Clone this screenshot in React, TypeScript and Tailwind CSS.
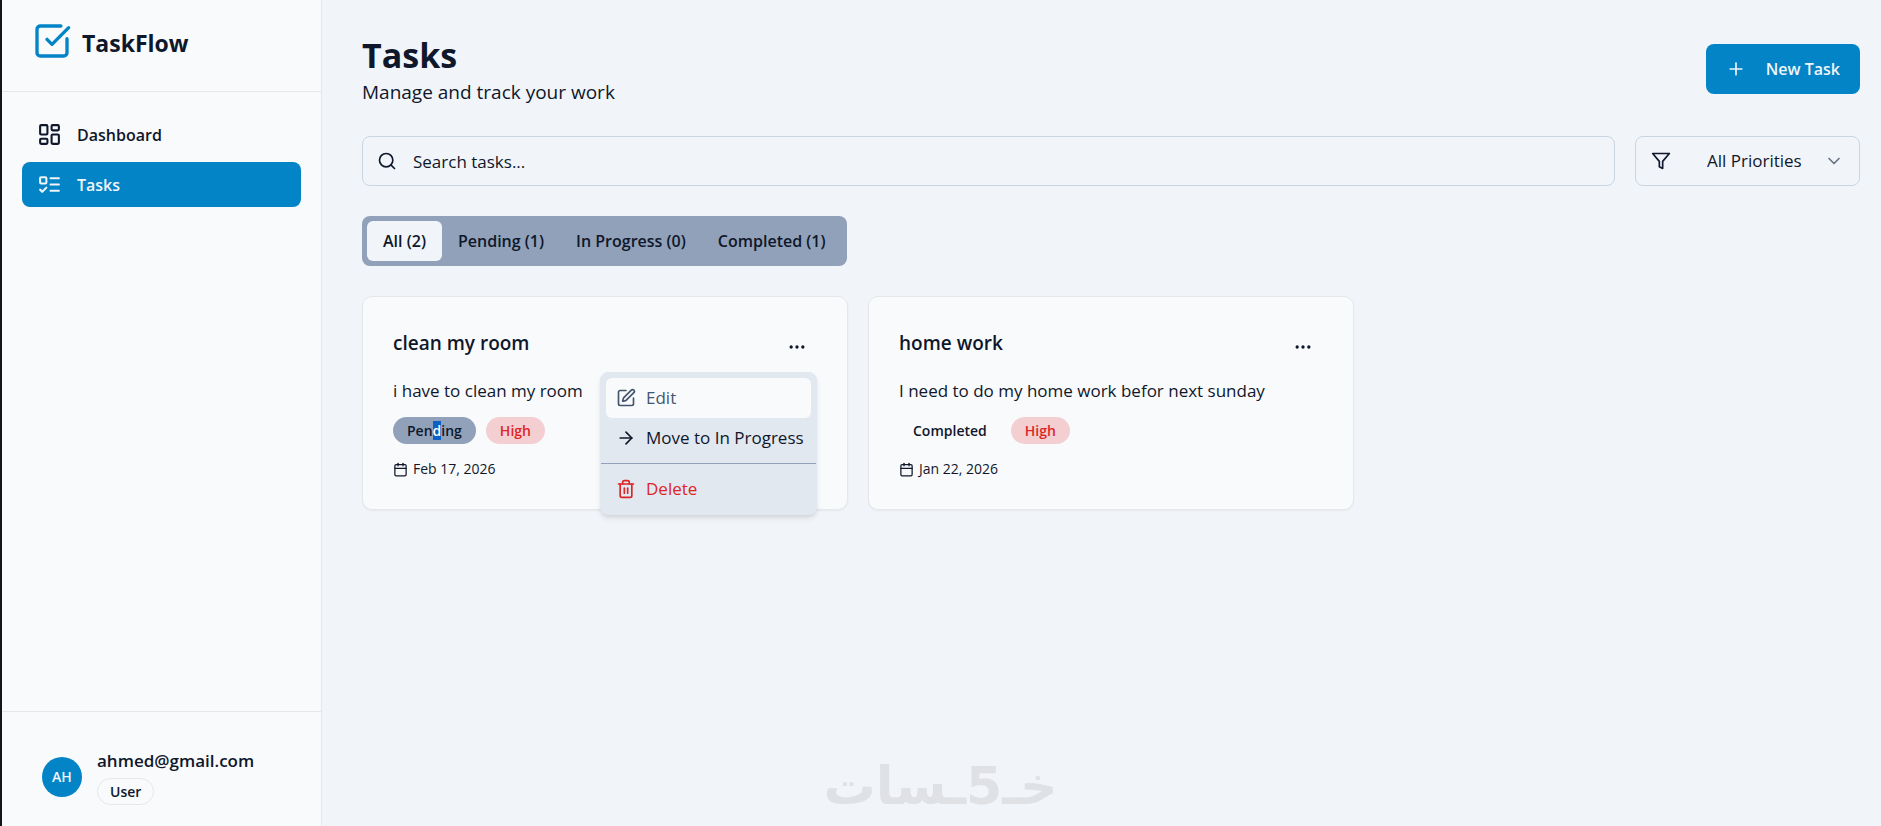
import React from "react";
import {
  ArrowRight,
  Calendar,
  ChevronDown,
  Ellipsis,
  LayoutDashboard,
  Plus,
  Search,
  SquareCheckBig,
  SquarePen,
} from "lucide-react";

const tabs = [
  { label: "All (2)", active: true },
  { label: "Pending (1)", active: false },
  { label: "In Progress (0)", active: false },
  { label: "Completed (1)", active: false },
];

const ListTodoIcon = () => (
  <svg
    viewBox="0 0 24 24"
    fill="none"
    stroke="currentColor"
    strokeWidth="2"
    strokeLinecap="round"
    strokeLinejoin="round"
    className="size-[25px]"
  >
    <rect x="3" y="5" width="6" height="6" rx="1" />
    <path d="m3 17 2 2 4-4" />
    <path d="M13 6h8" />
    <path d="M13 12h8" />
    <path d="M13 18h8" />
  </svg>
);

const FilterIcon = () => (
  <svg
    viewBox="0 0 24 24"
    fill="none"
    stroke="currentColor"
    strokeWidth="2"
    strokeLinecap="round"
    strokeLinejoin="round"
    className="pointer-events-none absolute left-4 size-5"
  >
    <polygon points="22 3 2 3 10 12.46 10 19 14 21 14 12.46 22 3" />
  </svg>
);

const TrashIcon = () => (
  <svg
    viewBox="0 0 24 24"
    fill="none"
    stroke="currentColor"
    strokeWidth="2"
    strokeLinecap="round"
    strokeLinejoin="round"
    className="size-5"
  >
    <path d="M3 6h18" />
    <path d="M19 6v14c0 1-1 2-2 2H7c-1 0-2-1-2-2V6" />
    <path d="M8 6V4c0-1 1-2 2-2h4c1 0 2 1 2 2v2" />
    <path d="M10 11v6" />
    <path d="M14 11v6" />
  </svg>
);

const Sidebar = () => {
  return (
    <aside className="flex w-[322px] shrink-0 flex-col border-r border-l-2 border-r-gray-200 border-l-[#17131c] bg-[#f9fafc]">
      <div className="flex h-[92px] items-start gap-[10px] border-b border-gray-200 px-[30px] pt-[21px]">
        <SquareCheckBig className="size-10 text-[#0284c7]" />
        <span className="pt-1 text-[23px] leading-9 font-bold">TaskFlow</span>
      </div>
      <nav className="flex flex-1 flex-col gap-[5px] p-5 font-semibold">
        <a href="#" className="flex h-[45px] items-center gap-[15px] rounded-lg px-[15px] text-[16px]">
          <LayoutDashboard className="size-[25px]" />
          Dashboard
        </a>
        <a
          href="#"
          className="flex h-[45px] items-center gap-[15px] rounded-lg bg-[#0284c7] px-[15px] text-[16px] text-[#f1f5f9]"
        >
          <ListTodoIcon />
          Tasks
        </a>
      </nav>
      <div className="flex items-center gap-[15px] border-t border-gray-200 px-10 pt-9 pb-[21px]">
        <div className="flex size-10 items-center justify-center rounded-full bg-[#0284c7] text-[14px] font-semibold text-[#f1f5f9]">
          AH
        </div>
        <div>
          <p className="text-[17px] leading-[26px] font-semibold">ahmed@gmail.com</p>
          <span className="mt-1 inline-flex h-[27px] items-center rounded-full border border-gray-200 px-3 text-[14px] font-semibold">
            User
          </span>
        </div>
      </div>
    </aside>
  );
};

const ActionsMenu = () => {
  return (
    <div className="absolute top-full right-0 z-10 mt-[5px] w-[217px] rounded-lg border border-slate-200 bg-slate-200 py-[5px] text-[17px] shadow-md">
      <div className="px-[5px]">
        <button className="flex h-10 w-full items-center gap-[10px] rounded-md bg-[#f9fafc] px-[10px] text-slate-600">
          <SquarePen className="size-5" />
          Edit
        </button>
        <button className="flex h-10 w-full items-center gap-[10px] rounded-md px-[10px] whitespace-nowrap">
          <ArrowRight className="size-5 shrink-0" />
          Move to In Progress
        </button>
      </div>
      <div className="my-[5px] h-px bg-slate-400" />
      <div className="px-[5px]">
        <button className="flex h-10 w-full items-center gap-[10px] rounded-md px-[10px] text-[#dc2626]">
          <TrashIcon />
          Delete
        </button>
      </div>
    </div>
  );
};

type TaskCardProps = {
  title: string;
  description: string;
  status: React.ReactNode;
  statusClass?: string;
  date: string;
  menuOpen?: boolean;
};

const TaskCard = ({ title, description, status, statusClass = "", date, menuOpen }: TaskCardProps) => {
  return (
    <div className="rounded-[10px] border border-gray-200 bg-[#f9fafc] p-[30px] shadow-xs">
      <div className="flex items-start justify-between">
        <h3 className="text-[19px] leading-8 font-semibold">{title}</h3>
        <div className="relative">
          <button aria-label="Task actions" className="flex size-10 items-center justify-center">
            <Ellipsis className="size-5" />
          </button>
          {menuOpen && <ActionsMenu />}
        </div>
      </div>
      <p className="mt-[11px] text-[17px] leading-[25px]">{description}</p>
      <div className="mt-[14px] flex gap-[10px] text-[14px] font-semibold">
        <span className={`flex h-[27px] items-center rounded-full px-[14px] ${statusClass}`}>{status}</span>
        <span className="flex h-[27px] items-center rounded-full bg-[#f3cfd2] px-[14px] text-[#dc2626]">High</span>
      </div>
      <div className="mt-[15px] flex items-center gap-[5px] text-[14px] leading-5">
        <Calendar className="size-[15px]" />
        {date}
      </div>
    </div>
  );
};

const App = () => {
  return (
    <div className="flex min-h-screen bg-[#f1f5f9] font-['Open_Sans',sans-serif] text-slate-900">
      <Sidebar />
      <main className="flex-1 pt-8 pr-[21px] pl-10">
        <div className="flex items-center justify-between">
          <div>
            <h1 className="text-[34px] leading-[46px] font-bold">Tasks</h1>
            <p className="text-[19px] leading-7">Manage and track your work</p>
          </div>
          <button className="flex h-[50px] items-center gap-5 rounded-lg bg-[#0284c7] px-5 text-[16px] font-semibold text-[#f1f5f9]">
            <Plus className="size-5" />
            New Task
          </button>
        </div>

        <div className="mt-[30px] flex gap-5 text-[17px]">
          <label className="relative flex flex-1 items-center">
            <Search className="pointer-events-none absolute left-[15px] size-5" />
            <input
              type="text"
              aria-label="Search tasks"
              placeholder="Search tasks..."
              className="h-[50px] w-full rounded-lg border border-slate-300 pr-4 pl-[50px] placeholder:text-slate-900"
            />
          </label>
          <label className="relative flex w-[225px] items-center">
            <FilterIcon />
            <select
              aria-label="Priority"
              className="h-[50px] w-full appearance-none rounded-lg border border-slate-300 pl-[71px]"
            >
              <option>All Priorities</option>
            </select>
            <ChevronDown className="pointer-events-none absolute right-4 size-5 text-gray-500" />
          </label>
        </div>

        <div className="mt-[30px] inline-flex rounded-lg bg-slate-400 p-[5px] text-[16px] font-semibold">
          {tabs.map((tab) => (
            <button
              key={tab.label}
              className={`h-10 rounded-md px-4 whitespace-nowrap ${tab.active ? "bg-[#f1f5f9]" : ""}`}
            >
              {tab.label}
            </button>
          ))}
        </div>

        <div className="mt-[30px] grid grid-cols-3 gap-5">
          <TaskCard
            title="clean my room"
            description="i have to clean my room"
            status={
              <span>
                Pen<span className="bg-[#0b62c4] text-white">d</span>ing
              </span>
            }
            statusClass="bg-slate-400"
            date="Feb 17, 2026"
            menuOpen
          />
          <TaskCard
            title="home work"
            description="I need to do my home work befor next sunday"
            status="Completed"
            date="Jan 22, 2026"
          />
        </div>
      </main>

      {/* site watermark */}
      <div
        dir="rtl"
        lang="ar"
        className="pointer-events-none fixed inset-x-0 bottom-0 flex h-20 items-center justify-center font-['DejaVu_Sans',sans-serif] text-[52px] leading-none font-bold text-[#dfe1e5]"
      >
        <span>خـ</span>
        <span>5</span>
        <span>ـسات</span>
      </div>
    </div>
  );
};

export default App;
